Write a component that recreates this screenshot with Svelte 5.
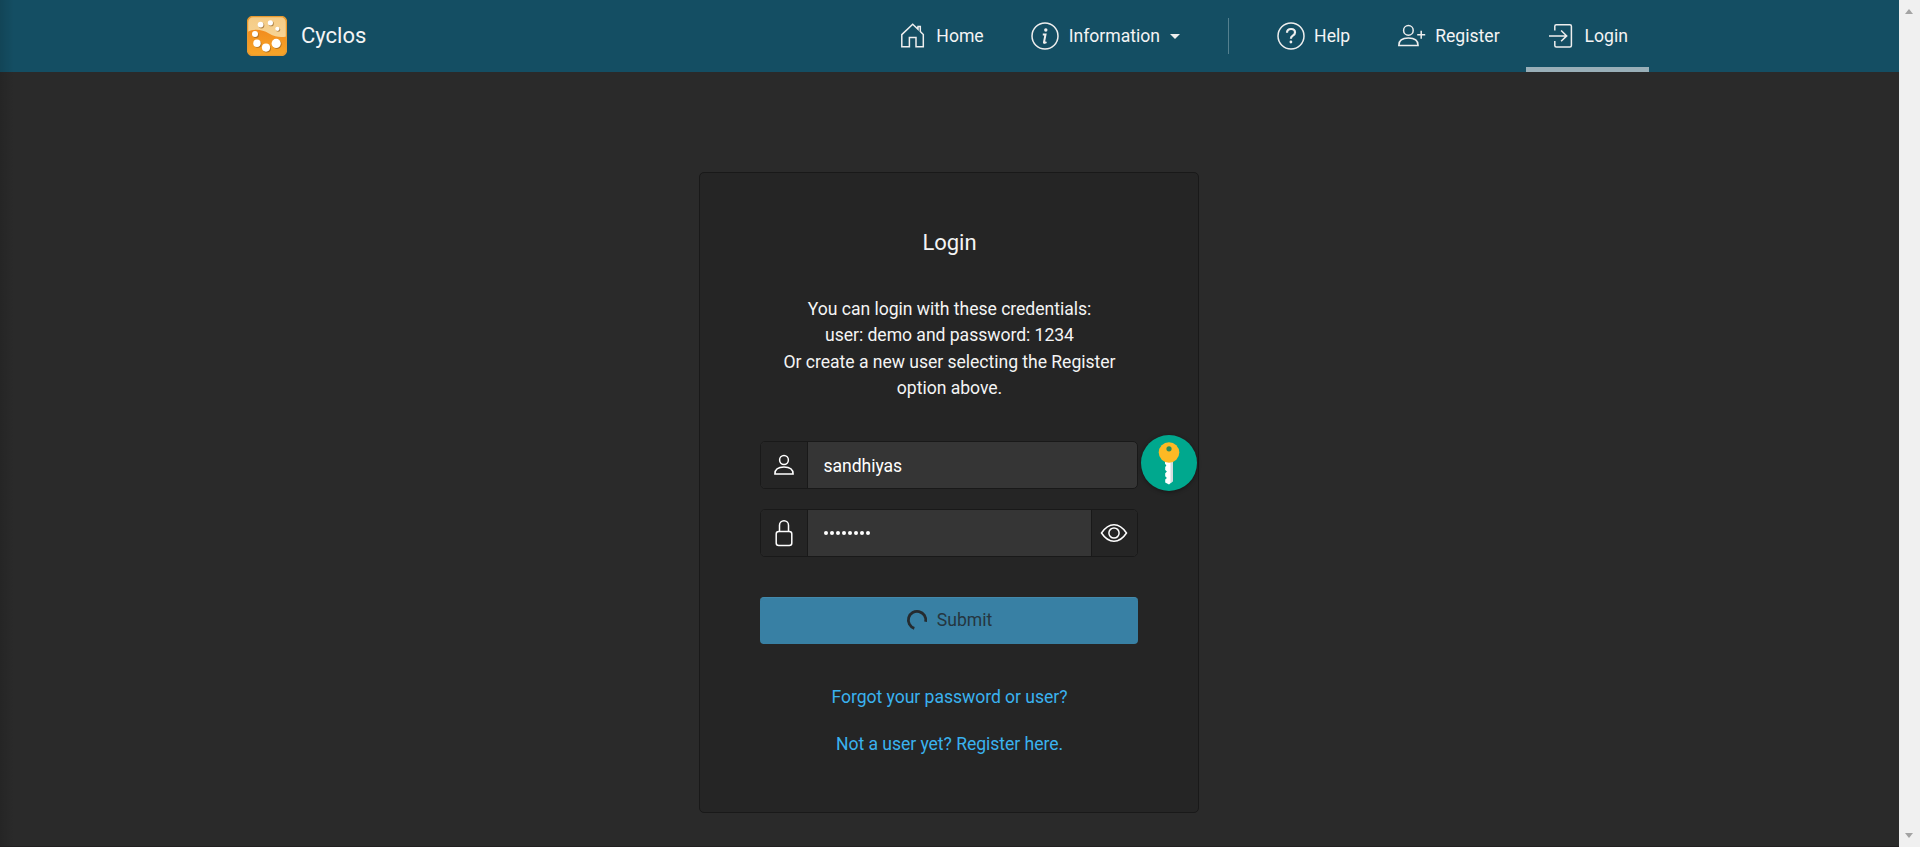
<script>
  const dots = [
    [13.6, 8.6, 2.9], [23.4, 6.8, 2.6], [30.4, 12.8, 2.1], [8, 18, 3],
    [10, 27.2, 3.7], [19, 31.6, 4.1], [29.2, 27.4, 4.6]
  ];
  let user = 'sandhiyas';
</script>

<div class="screen">
  <div class="page">
    <header>
      <div class="brand">
        <svg class="logo" viewBox="0 0 40 40">
          <defs>
            <linearGradient id="top" x1="0" y1="0" x2="0" y2="1"><stop offset="0" stop-color="#f5cb84" /><stop offset="1" stop-color="#f7dba5" /></linearGradient>
            <linearGradient id="low" x1="0" y1="0" x2="0" y2="1"><stop offset="0" stop-color="#f28c1e" /><stop offset="1" stop-color="#f8a629" /></linearGradient>
          </defs>
          <rect x=".5" y=".5" width="39" height="39" rx="5.5" fill="url(#top)" />
          <path d="M.5 16C7 12.500 15 13.500 22 17.500S34 21.500 39.500 20.500V34a5.500 5.500 0 0 1-5.500 5.500H6A5.500 5.500 0 0 1 .5 34Z" fill="url(#low)" />
          <rect x=".5" y=".5" width="39" height="39" rx="5.5" fill="none" stroke="#e89a30" />
          {#each dots as [x, y, r]}
            <circle cx={x + 0.8} cy={y + 0.9} {r} fill="#8a5a20" opacity=".65" />
            <circle cx={x} cy={y} {r} fill="#fff" />
          {/each}
        </svg>
        <span>Cyclos</span>
      </div>
      <nav>
        <a class="item home">
          <svg viewBox="0 0 28 28"><path d="M2.800 12.600 13.700 2.200l5.300 5V4.500h2.300v5l3 3.100v12.200h-7.300v-9.300h-6.600v9.300H2.800Z" /></svg>
          <span>Home</span>
        </a>
        <a class="item info">
          <svg viewBox="0 0 28 28"><circle cx="14" cy="14" r="13" /><circle cx="14.800" cy="8" r="1.700" class="solid" /><path d="M11.800 12.500h2.700l-1.500 7.600q-.3 1.500 2.500.1" stroke-width="2" /></svg>
          <span>Information</span>
          <i class="caret"></i>
        </a>
        <i class="divider"></i>
        <a class="item help">
          <svg viewBox="0 0 28 28"><circle cx="14" cy="14" r="13" /><path d="M10 10.700q0-3.700 4.100-3.700 3.900 0 3.900 3.400 0 1.800-2.200 3.200-1.900 1.200-1.900 3.200" stroke-width="2.200" /><circle cx="13.900" cy="20" r="1.400" class="solid" /></svg>
          <span>Help</span>
        </a>
        <a class="item register">
          <svg viewBox="0 0 28 28"><circle cx="10.400" cy="8.400" r="4.800" /><path d="M.8 23.400c0-5 4-7.300 9.600-7.300s9.700 2.300 9.700 7.300ZM23.200 8.800v8M19.200 12.800h8" /></svg>
          <span>Register</span>
        </a>
        <a class="item login">
          <svg viewBox="0 0 28 28"><path d="M6.800 8.500V4.200q0-1.500 1.500-1.500h13.600q1.500 0 1.500 1.500v19.200q0 1.500-1.500 1.500H8.300q-1.500 0-1.500-1.500v-4.300M1 13.900h17.700M13.100 8.500l5.600 5.400-5.600 5.400" /></svg>
          <span>Login</span>
        </a>
      </nav>
    </header>

    <main>
      <section class="card">
        <h1>Login</h1>
        <p class="intro">You can login with these credentials:<br />user: demo and password: 1234<br />Or create a new user selecting the Register<br />option above.</p>
        <div class="field">
          <span class="addon">
            <svg viewBox="0 0 24 28"><circle cx="12" cy="9" r="4.400" /><path d="M2.900 23c0-5 4-6.900 9.100-6.900s9.100 1.900 9.100 6.900Z" /></svg>
          </span>
          <span class="value name">{user}</span>
          <svg class="key" viewBox="0 0 60 60">
            <circle cx="30" cy="30" r="28" fill="#00a88e" />
            <path d="M26 26h8v22l-4 3.400-3.800-2v-3l1.700-1.500-1.700-1.700v-3l1.700-1.600-1.700-1.700v-3l1.200-1.500-1.400-1.600Z" fill="#fff" />
            <path d="M31.500 26H34v22l-2.500 2.200Z" fill="#d5dbdd" />
            <circle cx="30" cy="19.500" r="10.300" fill="#fdb924" />
            <circle cx="30" cy="15.800" r="2.600" fill="#2b8c59" />
          </svg>
        </div>
        <div class="field">
          <span class="addon">
            <svg viewBox="0 0 24 28"><rect x="4.200" y="12.500" width="15.600" height="14" rx="2.500" /><path d="M7.500 12.500V6.300a4.500 4.500 0 0 1 9 0v6.200" /></svg>
          </span>
          <span class="value secret">{#each Array(8) as _}<i></i>{/each}</span>
          <span class="addon eye">
            <svg viewBox="0 0 28 28"><path d="M1.500 14Q7 5.700 14 5.700T26.500 14Q21 22.300 14 22.300T1.500 14Z" /><circle cx="14" cy="14" r="5.100" /></svg>
          </span>
        </div>
        <button>
          <svg viewBox="0 0 22 22"><path d="M8.300 19.300A8.700 8.700 0 1 1 19.600 12.700" /></svg>
          <span>Submit</span>
        </button>
        <a class="link">Forgot your password or user?</a>
        <a class="link">Not a user yet? Register here.</a>
      </section>
    </main>
  </div>
  <div class="scrollbar"><i class="up"></i><i class="down"></i></div>
</div>

<style>
  :global(body) { margin: 0; background: #2a2a2a; overflow: hidden; }
  .screen { display: flex; width: 1920px; height: 847px; font: 17.6px/26.4px Roboto, sans-serif; color: #f4f4f4; }
  .page { position: relative; box-sizing: border-box; width: 1899px; height: 847px; background: #2a2a2a; border-bottom: 1px solid #211f20; }
  .page::before { content: ""; position: absolute; left: 0; top: 0; width: 14px; height: 100%; background: linear-gradient(90deg, rgba(0,0,0,.12), transparent); }
  header { box-sizing: border-box; height: 72px; padding: 0 250px 0 247px; background: #144e63; display: flex; justify-content: space-between; }
  .brand { display: flex; align-items: center; gap: 14px; font-size: 22px; }
  .logo { width: 40px; height: 40px; }
  nav { display: flex; }
  .item { box-sizing: border-box; display: flex; align-items: center; padding: 0 24px; height: 72px; }
  .item svg { width: 28px; height: 28px; margin-right: 9px; }
  .item.info svg { margin-right: 10px; }
  .item.home { padding-right: 23px; }
  svg { fill: none; stroke: #eee; stroke-width: 1.500; flex: none; }
  .logo, .key { stroke: none; }
  .solid { fill: #eee; stroke: none; }
  .caret { border: 5px solid transparent; border-top-color: #eee; border-bottom: 0; margin-left: 10px; }
  .divider { width: 1px; height: 36px; margin: 18px 24px 0; background: #54808f; }
  .item.register { padding-right: 26px; }
  .item.login { padding: 0 21px 0 22px; border-bottom: 5px solid #99afb8; }
  .login svg, .login span { position: relative; top: 2.500px; }
  main { display: flex; justify-content: center; padding: 100px 1px 0 0; }
  .card { box-sizing: border-box; width: 500px; height: 641px; border: 1px solid #191919; border-radius: 5px; background: #252525; padding: 53px 59px 0 60px; display: flex; flex-direction: column; text-align: center; }
  h1 { margin: 0; font-size: 22px; line-height: 33px; font-weight: 400; }
  .intro { margin: 37px 0 39px; white-space: nowrap; letter-spacing: -.04px; }
  .field { box-sizing: border-box; position: relative; flex: none; display: flex; width: 378px; height: 48px; border: 1px solid #191919; border-radius: 5px; background: #353535; margin-bottom: 20px; }
  .addon { box-sizing: border-box; width: 47px; display: flex; align-items: center; justify-content: center; background: #252525; border-right: 1px solid #191919; border-radius: 4px 0 0 4px; }
  .addon svg { width: 24px; height: 28px; stroke: #fff; }
  .addon.eye { width: 46px; border-right: 0; border-left: 1px solid #191919; border-radius: 0 4px 4px 0; padding-right: 1px; }
  .addon.eye svg { width: 28px; }
  .value { flex: 1; padding-left: 16px; display: flex; align-items: center; color: #fff; }
  .name { padding-top: 3px; padding-left: 15.500px; letter-spacing: -.05px; }
  .secret { gap: 2px; }
  .secret i { width: 4px; height: 4px; border-radius: 50%; background: #fff; }
  .key { position: absolute; left: 378px; top: -9px; width: 60px; height: 60px; filter: drop-shadow(0 1px 2px rgba(0,0,0,.4)); }
  button { flex: none; display: flex; align-items: center; justify-content: center; gap: 9px; width: 378px; height: 47px; margin: 20px 0 40px; padding: 0; border: 0; border-top: 1px solid #4389ab; border-radius: 4px; background: #3880a4; color: #253640; font: inherit; }
  button svg { width: 22px; height: 22px; margin-top: -1px; stroke: #252b2f; stroke-width: 2.800; }
  .link { color: #3ab2ef; margin-bottom: 20.600px; letter-spacing: -.05px; }
  .scrollbar { box-sizing: border-box; width: 21px; height: 847px; background: #f0f0f0; padding: 9px 0 9px 6px; display: flex; flex-direction: column; justify-content: space-between; }
  .up, .down { width: 0; border: 4.500px solid transparent; }
  .up { border-top: 0; border-bottom: 5px solid #a3a3a3; }
  .down { border-bottom: 0; border-top: 5px solid #a3a3a3; }
</style>
